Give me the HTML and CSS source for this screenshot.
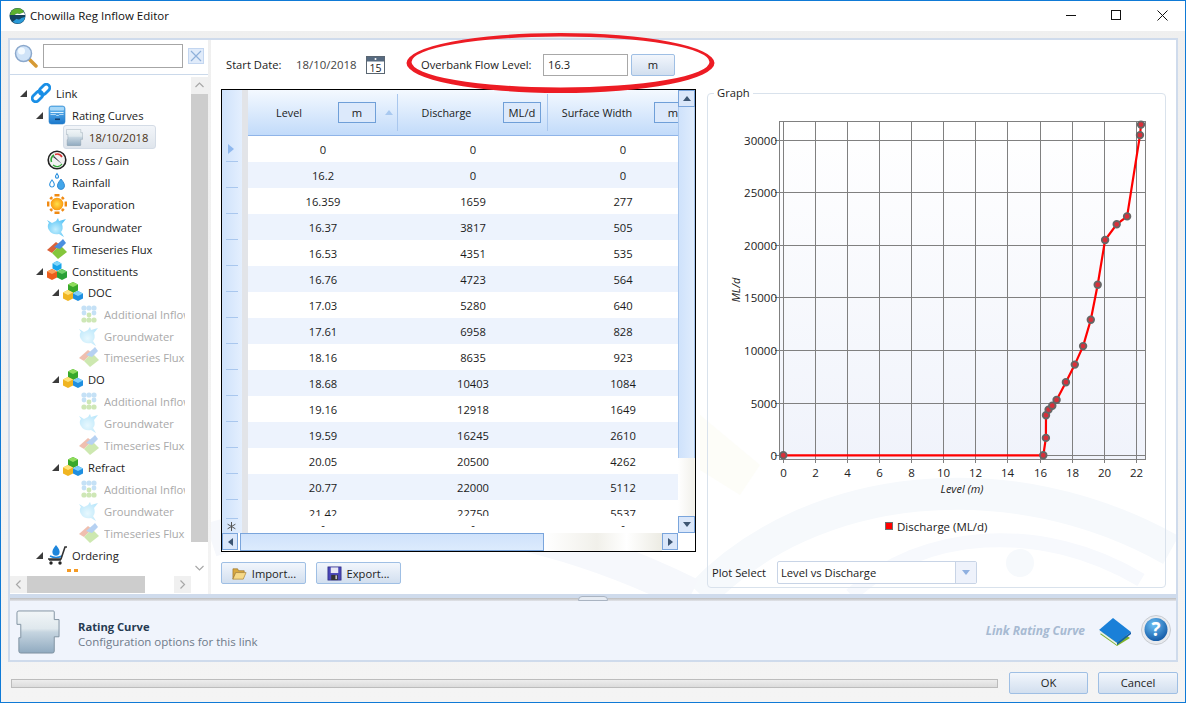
FILE: index.html
```html
<!DOCTYPE html>
<html lang="en">
<head>
<meta charset="utf-8">
<title>Chowilla Reg Inflow Editor</title>
<link rel="stylesheet" href="styles.css">
</head>
<body>
<svg class="defs" width="0" height="0" aria-hidden="true">
<defs>
<linearGradient id="gTile" x1="0" y1="0" x2="0" y2="1"><stop offset="0" stop-color="#f2f6f8"/><stop offset=".42" stop-color="#dfe8ed"/><stop offset=".5" stop-color="#c6d5e0"/><stop offset="1" stop-color="#90aac0"/></linearGradient>
<linearGradient id="gBlue" x1="0" y1="0" x2="0" y2="1"><stop offset="0" stop-color="#6fbdf2"/><stop offset="1" stop-color="#1a78cc"/></linearGradient>
<radialGradient id="gGw" cx=".45" cy=".6" r=".6"><stop offset="0" stop-color="#c4eefd"/><stop offset="1" stop-color="#5cc6f6"/></radialGradient>
<radialGradient id="gHelp" cx=".4" cy=".3" r=".8"><stop offset="0" stop-color="#6cc0f5"/><stop offset="1" stop-color="#0a4f9e"/></radialGradient>
<radialGradient id="gSun" cx=".5" cy=".5" r=".5"><stop offset="0" stop-color="#ffe04a"/><stop offset="1" stop-color="#fa9a10"/></radialGradient>
<symbol id="i-tile" viewBox="0 0 46 46"><path d="M3 1H39Q40 1 40 2V10H45V28H40V43Q40 45 38 45H5Q3 45 3 43V29H5V15H1V3Q1 1 3 1Z" fill="url(#gTile)" stroke="#7f919f"/></symbol>
<symbol id="i-link" viewBox="0 0 20 20"><g fill="#fff" fill-opacity="0" stroke="#1a8fe6" stroke-width="2.800"><rect x="0.500" y="10" width="12" height="7" rx="3.500" transform="rotate(-45 6.500 13.500)"/><rect x="7.500" y="3" width="12" height="7" rx="3.500" transform="rotate(-45 13.500 6.500)"/></g></symbol>
<symbol id="i-rating" viewBox="0 0 20 20"><rect x="2" y="1" width="16" height="18" rx="2.500" fill="url(#gBlue)" stroke="#2a7fc8" stroke-width=".6"/><rect x="3" y="2" width="14" height="3.500" rx="1" fill="#a8d8f8"/><path d="M3.500 7.500h13" stroke="#dff2ff"/><path d="M3.500 9.500h5l1 1h2l1-1h4" fill="none" stroke="#dff2ff" stroke-width=".7"/><rect x="8" y="13.500" width="5" height="1.600" fill="#123f6e"/></symbol>
<symbol id="i-gauge" viewBox="0 0 20 20"><circle cx="10" cy="10" r="8.800" fill="#f2f2f2" stroke="#222" stroke-width="1.600"/><path d="M4.500 12A6 6 0 0 1 7 5" fill="none" stroke="#2fa836" stroke-width="1.500"/><path d="M8 4.500A6 6 0 0 1 15 7" fill="none" stroke="#d93030" stroke-width="1.500"/><path d="M15 14 7 6l-1 1z" fill="#334"/><path d="M6 15a6 6 0 0 0 9-1" fill="none" stroke="#2fa836" stroke-width="1.200"/></symbol>
<symbol id="i-rain" viewBox="0 0 20 20"><g fill="#fff" stroke="#2a90de" stroke-width="1.100"><path d="M5 8c2 2.500 2.700 3.800 2.200 5.300a2.300 2.300 0 0 1-4.400 0C2.300 11.800 3 10.500 5 8z"/><path d="M10 1.500c1.400 1.800 1.800 2.600 1.400 3.700a1.500 1.500 0 0 1-2.800 0C8.200 4.100 8.600 3.300 10 1.500z"/></g><path d="M14 7c2.800 3.500 4 5.500 3.300 8a3.500 3.500 0 0 1-6.700 0c-.6-2.500.6-4.500 3.400-8z" fill="#43a6ea" stroke="#1a78c8" stroke-width=".8"/></symbol>
<symbol id="i-sun" viewBox="0 0 20 20"><g stroke="#f08a12" stroke-width="2.400"><path d="M7.500 1.200l5 0M7.500 18.800h5M1.200 7.500v5M18.800 7.500v5M3.200 5.200l2-2M14.800 16.800l2-2M3.200 14.800l2 2M14.800 3.200l2 2"/></g><circle cx="10" cy="10" r="6.300" fill="url(#gSun)"/></symbol>
<symbol id="i-gw" viewBox="0 0 20 20"><path d="M0 3l5 3 4-2 2-3 1 3 7-2-4 5c1 3 1 6-1 8l3 5-5-3c-4 1-8 0-10-4C0 10 1 7 2 6z" fill="url(#gGw)"/></symbol>
<symbol id="i-flux" viewBox="0 0 20 20"><path d="M0 11 9 3l4 3-8 8z" fill="#d9623a"/><path d="M5 14l8-8 7 7-9 7z" fill="#84c63c"/><path d="M7 8l7-6 2-2 3 4-6 6z" fill="#4a8edf"/></symbol>
<symbol id="i-cubes" viewBox="0 0 20 20"><path d="M10 0l4.500 2.500v5L10 10 5.500 7.500v-5z" fill="#18a4ea"/><path d="M10 0l4.500 2.500L10 5 5.500 2.500z" fill="#7fd5fa"/><path d="M5 8l5 2.500v6L5 19 0 16.500v-6z" fill="#ec5e1c"/><path d="M5 8l5 2.500L5 13 0 10.500z" fill="#fba15a"/><path d="M15 8l5 2.500v6L15 19l-5-2.500v-6z" fill="#2a9f36"/><path d="M15 8l5 2.500-5 2.500-5-2.500z" fill="#6fd06a"/></symbol>
<symbol id="i-cubes2" viewBox="0 0 20 20"><path d="M10 0l5 2.500v6L10 11 5 8.500v-6z" fill="#38a82a"/><path d="M10 0l5 2.500L10 5 5 2.500z" fill="#8fdc5c"/><path d="M5 8l5 2.500v6L5 19 0 16.500v-6z" fill="#f0b522"/><path d="M5 8l5 2.500L5 13 0 10.500z" fill="#ffe27a"/><path d="M15 9l5 2.500v5L15 19l-5-2.500v-5z" fill="#1f8fe0"/><path d="M15 9l5 2.500-5 2.500-5-2.500z" fill="#7fd0fa"/></symbol>
<symbol id="i-add" viewBox="0 0 20 20"><g fill="#6fb6ea"><circle cx="5" cy="4" r="2.600"/><circle cx="10" cy="4" r="2.600"/><circle cx="15" cy="4" r="2.600"/><circle cx="5" cy="9" r="2.400"/><circle cx="15" cy="9" r="2.400"/></g><g fill="#86c44a"><circle cx="10" cy="11" r="2.400"/><circle cx="5" cy="16" r="2.600"/><circle cx="10" cy="16" r="2.600"/><circle cx="15" cy="16" r="2.600"/></g></symbol>
<symbol id="i-cart" viewBox="0 0 20 20"><path d="M9 0c3 3.500 4 5.500 3.500 8a3.600 3.600 0 0 1-7 0C5 5.500 6 3.500 9 0z" fill="#1e86dc"/><path d="M3 11c4 2 8 2 12 0" fill="none" stroke="#1e86dc" stroke-width="1.500"/><path d="M1 14h13l4-12h2M2 15h12" fill="none" stroke="#333" stroke-width="1.600"/><circle cx="4" cy="18" r="1.700" fill="#222"/><circle cx="13" cy="18" r="1.700" fill="#222"/></symbol>
<symbol id="i-orange" viewBox="0 0 20 20"><path d="M4 2h4v3H4zM11 2h4v3h-4z" fill="#f59a23"/></symbol>
</defs>
</svg>

<div class="window">
  <header class="titlebar">
    <svg class="app-logo" viewBox="0 0 18 18" width="17" height="18"><circle cx="9" cy="9" r="8.500" fill="#15425f"/><path d="M1 8a8 8 0 0 1 15-3l-5 2a4 4 0 0 0-5 1z" fill="#5cb030"/><path d="M17 10a8 8 0 0 1-13 5l4-3a4 4 0 0 0 5-1z" fill="#2a9ad8"/><path d="M6 8a4 4 0 0 1 5-1l5-2 1 3z" fill="#fff"/></svg>
    <span class="app-title">Chowilla Reg Inflow Editor</span>
    <div class="win-controls">
      <svg class="win-btn" viewBox="0 0 46 30" width="46" height="30"><path d="M19 14.500h10" stroke="#111" fill="none"/></svg>
      <svg class="win-btn" viewBox="0 0 46 30" width="46" height="30"><rect x="18.500" y="9.500" width="9" height="9" stroke="#111" fill="none"/></svg>
      <svg class="win-btn" viewBox="0 0 46 30" width="46" height="30"><path d="M18.500 9.500l10 10M28.500 9.500l-10 10" stroke="#111" fill="none"/></svg>
    </div>
  </header>

  <div class="panel">
    <div class="top">
      <aside class="nav">
        <div class="search">
          <svg class="search-icon" viewBox="0 0 24 24" width="24" height="24"><path d="M15 15l7 7" stroke="#d69a35" stroke-width="3.500" stroke-linecap="round"/><circle cx="9.500" cy="9.500" r="8" fill="#cfe3f8" stroke="#8ba8cc" stroke-width="1.500"/><circle cx="7.500" cy="7" r="3.500" fill="#f4faff"/></svg>
          <div class="search-input"></div>
          <div class="search-clear"><svg viewBox="0 0 16 16" width="16" height="16"><path d="M3 3l10 10M13 3L3 13" stroke="#8fb0da" stroke-width="1.200"/></svg></div>
        </div>
        <div class="nav-rule"></div>
        <div class="tree-wrap">
          <div class="tree">
            <div class="row l0"><i class="arrow"></i><svg class="ico"><use href="#i-link"/></svg><span>Link</span></div>
            <div class="row l1"><i class="arrow"></i><svg class="ico"><use href="#i-rating"/></svg><span>Rating Curves</span></div>
            <div class="row l1"><div class="selected"><svg class="ico-tile"><use href="#i-tile"/></svg><span>18/10/2018</span></div></div>
            <div class="row l1 down"><i class="noarrow"></i><svg class="ico"><use href="#i-gauge"/></svg><span>Loss / Gain</span></div>
            <div class="row l1"><i class="noarrow"></i><svg class="ico"><use href="#i-rain"/></svg><span>Rainfall</span></div>
            <div class="row l1"><i class="noarrow"></i><svg class="ico"><use href="#i-sun"/></svg><span>Evaporation</span></div>
            <div class="row l1 down"><i class="noarrow"></i><svg class="ico"><use href="#i-gw"/></svg><span>Groundwater</span></div>
            <div class="row l1"><i class="noarrow"></i><svg class="ico"><use href="#i-flux"/></svg><span>Timeseries Flux</span></div>
            <div class="row l1"><i class="arrow"></i><svg class="ico"><use href="#i-cubes"/></svg><span>Constituents</span></div>
            <div class="row l2 up"><i class="arrow"></i><svg class="ico"><use href="#i-cubes2"/></svg><span>DOC</span></div>
            <div class="row l3 off"><i class="noarrow"></i><svg class="ico"><use href="#i-add"/></svg><span>Additional Inflow</span></div>
            <div class="row l3 off"><i class="noarrow"></i><svg class="ico"><use href="#i-gw"/></svg><span>Groundwater</span></div>
            <div class="row l3 off up"><i class="noarrow"></i><svg class="ico"><use href="#i-flux"/></svg><span>Timeseries Flux</span></div>
            <div class="row l2"><i class="arrow"></i><svg class="ico"><use href="#i-cubes2"/></svg><span>DO</span></div>
            <div class="row l3 off"><i class="noarrow"></i><svg class="ico"><use href="#i-add"/></svg><span>Additional Inflow</span></div>
            <div class="row l3 off"><i class="noarrow"></i><svg class="ico"><use href="#i-gw"/></svg><span>Groundwater</span></div>
            <div class="row l3 off"><i class="noarrow"></i><svg class="ico"><use href="#i-flux"/></svg><span>Timeseries Flux</span></div>
            <div class="row l2"><i class="arrow"></i><svg class="ico"><use href="#i-cubes2"/></svg><span>Refract</span></div>
            <div class="row l3 off"><i class="noarrow"></i><svg class="ico"><use href="#i-add"/></svg><span>Additional Inflow</span></div>
            <div class="row l3 off"><i class="noarrow"></i><svg class="ico"><use href="#i-gw"/></svg><span>Groundwater</span></div>
            <div class="row l3 off"><i class="noarrow"></i><svg class="ico"><use href="#i-flux"/></svg><span>Timeseries Flux</span></div>
            <div class="row l1"><i class="arrow"></i><svg class="ico"><use href="#i-cart"/></svg><span>Ordering</span></div>
            <div class="row l2"><i class="noarrow"></i><svg class="ico"><use href="#i-orange"/></svg></div>
          </div>
          <div class="nav-vscroll">
            <div class="nav-sbtn"><svg viewBox="0 0 17 17" width="17" height="17"><path d="M4.500 10l4-4 4 4" fill="none" stroke="#a8a8a8" stroke-width="1.200"/></svg></div>
            <div class="nav-vthumb"></div>
            <div class="nav-sbtn nav-sbtn-end"><svg viewBox="0 0 17 17" width="17" height="17"><path d="M4.500 7l4 4 4-4" fill="none" stroke="#a8a8a8" stroke-width="1.200"/></svg></div>
          </div>
        </div>
        <div class="nav-hscroll">
          <div class="nav-sbtn"><svg viewBox="0 0 17 17" width="17" height="17"><path d="M10.500 4.500l-4 4 4 4" fill="none" stroke="#a8a8a8" stroke-width="1.200"/></svg></div>
          <div class="nav-hthumb"></div>
          <div class="nav-sbtn nav-sbtn-end"><svg viewBox="0 0 17 17" width="17" height="17"><path d="M6.500 4.500l4 4-4 4" fill="none" stroke="#a8a8a8" stroke-width="1.200"/></svg></div>
          <div class="nav-corner"></div>
        </div>
      </aside>

      <main class="content">
        <svg class="watermark" viewBox="0 0 965 554" width="965" height="554" aria-hidden="true">
          <path d="M490 555C600 440 800 420 960 510" fill="none" stroke="#f6f9fc" stroke-width="32"/>
          <path d="M640 555C710 490 830 480 930 540" fill="none" stroke="#f7f9fd" stroke-width="14"/>
          <circle cx="809" cy="523" r="14" fill="#f6f9fc"/>
          <path d="M489 375l60 50-20 30-40-25z" fill="#fdfdf8"/>
          <path d="M0 500C150 450 330 480 480 555" fill="none" stroke="#f6f8fc" stroke-width="34"/>
        </svg>
        <svg class="scribble" viewBox="0 0 320 70" width="320" height="70" aria-hidden="true">
          <path fill-rule="evenodd" d="M.5 31a154 30 0 1 0 308 0a154 30 0 1 0-308 0ZM5.500 30a149 25.500 0 1 0 298 0a149 25.500 0 1 0-298 0Z" fill="#ed1c24"/>
        </svg>
        <div class="toolbar">
          <span class="lbl-start">Start Date:</span>
          <span class="val-date">18/10/2018</span>
          <svg class="cal" viewBox="0 0 19 18" width="19" height="18"><rect x=".5" y=".5" width="18" height="17" fill="#fff" stroke="#5a6672"/><rect x="1" y="1" width="17" height="4.500" fill="#566a80"/><circle cx="9.500" cy="3" r="1" fill="#fff"/><text x="9.500" y="15.500" text-anchor="middle" class="cal-num">15</text></svg>
          <span class="lbl-over">Overbank Flow Level:</span>
          <div class="input-over">16.3</div>
          <div class="btn btn-unit">m</div>
        </div>
        <div class="work">
          <div class="left-col">
            <div class="grid">
              <div class="grid-main">
                <div class="row-head">
                  <div class="rh-top"></div>
                  <div class="rh"><svg viewBox="0 0 6 10" width="6" height="10"><path d="M0 0l6 5-6 5z" fill="#8fb8ee"/></svg></div>
                  <div class="rh"></div><div class="rh"></div><div class="rh"></div><div class="rh"></div><div class="rh"></div><div class="rh"></div><div class="rh"></div><div class="rh"></div><div class="rh"></div><div class="rh"></div><div class="rh"></div><div class="rh"></div><div class="rh"></div>
                  <div class="rh rh-cut"></div>
                  <div class="rh rh-new"><svg viewBox="0 0 9 9" width="9" height="9"><path d="M4.500 0v9M.6 2.200l7.800 4.600M.6 6.800l7.800-4.600" stroke="#555" stroke-width="1"/></svg></div>
                </div>
                <div class="grid-body">
                  <div class="col-heads">
                    <div class="col-grip"></div>
                    <div class="col-head col-a"><span class="col-name name-a">Level</span><span class="unit">m</span><i class="sort"></i></div>
                    <div class="col-head col-b"><span class="col-name name-b">Discharge</span><span class="unit">ML/d</span></div>
                    <div class="col-head col-c"><span class="col-name name-c">Surface Width</span><span class="unit">m</span></div>
                  </div>
                  <div class="rows">
                    <div class="tr"><span>0</span><span>0</span><span>0</span></div>
                    <div class="tr alt"><span>16.2</span><span>0</span><span>0</span></div>
                    <div class="tr"><span>16.359</span><span>1659</span><span>277</span></div>
                    <div class="tr alt"><span>16.37</span><span>3817</span><span>505</span></div>
                    <div class="tr"><span>16.53</span><span>4351</span><span>535</span></div>
                    <div class="tr alt"><span>16.76</span><span>4723</span><span>564</span></div>
                    <div class="tr"><span>17.03</span><span>5280</span><span>640</span></div>
                    <div class="tr alt"><span>17.61</span><span>6958</span><span>828</span></div>
                    <div class="tr"><span>18.16</span><span>8635</span><span>923</span></div>
                    <div class="tr alt"><span>18.68</span><span>10403</span><span>1084</span></div>
                    <div class="tr"><span>19.16</span><span>12918</span><span>1649</span></div>
                    <div class="tr alt"><span>19.59</span><span>16245</span><span>2610</span></div>
                    <div class="tr"><span>20.05</span><span>20500</span><span>4262</span></div>
                    <div class="tr alt"><span>20.77</span><span>22000</span><span>5112</span></div>
                    <div class="tr tr-cut"><span>21.42</span><span>22750</span><span>5537</span></div>
                    <div class="tr tr-dash"><span>-</span><span>-</span><span>-</span></div>
                  </div>
                </div>
                <div class="vscroll">
                  <div class="sbtn"><i class="tri-up"></i></div>
                  <div class="vthumb"></div>
                  <div class="vtrack"></div>
                  <div class="sbtn"><i class="tri-down"></i></div>
                </div>
              </div>
              <div class="hscroll">
                <div class="sbtn sbtn-h"><i class="tri-left"></i></div>
                <div class="hthumb"></div>
                <div class="htrack"></div>
                <div class="sbtn sbtn-h"><i class="tri-right"></i></div>
                <div class="hcorner"></div>
              </div>
            </div>
            <div class="actions">
              <div class="btn btn-action"><svg viewBox="0 0 16 16" width="17" height="15"><path d="M1 3h5l1 2h6v2H4L1 14z" fill="#d9a93f" stroke="#96702a" stroke-width=".7"/><path d="M4 7h11l-3 7H1z" fill="#f6d987" stroke="#a67f32" stroke-width=".7"/></svg><span>Import...</span></div>
              <div class="btn btn-action"><svg viewBox="0 0 16 16" width="15" height="15"><rect x="1" y="1" width="14" height="14" fill="#4a47b8" stroke="#2d2b80" stroke-width=".8"/><rect x="4" y="1.500" width="8" height="6" fill="#e8e8f4"/><rect x="4.500" y="9.500" width="7" height="5.500" fill="#333"/><rect x="9" y="10" width="1.600" height="4" fill="#ccc"/></svg><span>Export...</span></div>
            </div>
          </div>
          <section class="graph">
            <span class="graph-legend">Graph</span>
            <svg class="chart" viewBox="708 100 457 455" width="457" height="455">
              <defs><linearGradient id="gPlot" x1="0" y1="0" x2="0" y2="1"><stop offset="0" stop-color="#fff"/><stop offset="1" stop-color="#f0f3fb"/></linearGradient></defs>
              <rect x="779.500" y="121.500" width="366" height="338" fill="url(#gPlot)"/>
              <g class="gridl">
                <path d="M783.500 121v342M815.500 121v342M847.500 121v342M879.500 121v342M911.500 121v342M943.500 121v342M975.500 121v342M1007.500 121v342M1040.500 121v342M1072.500 121v342M1104.500 121v342M1136.500 121v342"/>
                <path d="M775 140.500h370M775 192.500h370M775 245.500h370M775 297.500h370M775 350.500h370M775 403.500h370M775 455.500h370"/>
                <rect x="779.500" y="121.500" width="366" height="338" fill="none"/>
              </g>
              <g class="ytick"><text x="777" y="144.500">30000</text><text x="777" y="197">25000</text><text x="777" y="250">20000</text><text x="777" y="302">15000</text><text x="777" y="355">10000</text><text x="777" y="408">5000</text><text x="777" y="460">0</text></g>
              <g class="xtick"><text x="783.500" y="477">0</text><text x="815.500" y="477">2</text><text x="847.500" y="477">4</text><text x="879.500" y="477">6</text><text x="911.500" y="477">8</text><text x="943.500" y="477">10</text><text x="975.500" y="477">12</text><text x="1007.500" y="477">14</text><text x="1040.500" y="477">16</text><text x="1072.500" y="477">18</text><text x="1104.500" y="477">20</text><text x="1136.500" y="477">22</text></g>
              <text class="axis-title" x="962" y="493" text-anchor="middle">Level (m)</text>
              <text class="axis-title" transform="translate(740 290) rotate(-90)" text-anchor="middle">ML/d</text>
              <polyline class="curve" points="783.300,455.300 1043.300,455.300 1045.900,437.900 1046,415.200 1048.600,409.600 1052.300,405.700 1056.600,399.900 1065.900,382.200 1074.800,364.600 1083.100,346.100 1090.800,319.700 1097.700,284.700 1105.100,240 1116.700,224.300 1127.100,216.400 1140,135.100 1141,124.600"/>
              <g class="marks">
                <circle cx="783.300" cy="455.300" r="3.300"/><circle cx="1043.300" cy="455.300" r="3.300"/><circle cx="1045.900" cy="437.900" r="3.300"/><circle cx="1046" cy="415.200" r="3.300"/><circle cx="1048.600" cy="409.600" r="3.300"/><circle cx="1052.300" cy="405.700" r="3.300"/><circle cx="1056.600" cy="399.900" r="3.300"/><circle cx="1065.900" cy="382.200" r="3.300"/><circle cx="1074.800" cy="364.600" r="3.300"/><circle cx="1083.100" cy="346.100" r="3.300"/><circle cx="1090.800" cy="319.700" r="3.300"/><circle cx="1097.700" cy="284.700" r="3.300"/><circle cx="1105.100" cy="240" r="3.300"/><circle cx="1116.700" cy="224.300" r="3.300"/><circle cx="1127.100" cy="216.400" r="3.300"/><circle cx="1140" cy="135.100" r="3.300"/><circle cx="1141" cy="124.600" r="3.300"/>
              </g>
              <rect x="885.500" y="522.500" width="7" height="7" fill="#f00" stroke="#707070"/>
              <text class="legend-text" x="897" y="531">Discharge (ML/d)</text>
            </svg>
            <div class="plot-select">
              <span class="plot-label">Plot Select</span>
              <div class="combo"><span class="combo-text">Level vs Discharge</span><div class="combo-btn"><i class="combo-tri"></i></div></div>
            </div>
          </section>
        </div>
      </main>
    </div>
    <div class="splitter"><div class="grip"></div></div>
    <footer class="info">
      <svg class="info-tile"><use href="#i-tile"/></svg>
      <div class="info-text"><strong>Rating Curve</strong><span>Configuration options for this link</span></div>
      <span class="info-tag">Link Rating Curve</span>
      <svg class="book" viewBox="0 0 34 30" width="34" height="30"><path d="M2 18 14 9l18 13-13 8z" fill="#7fb32a"/><path d="M1 14 15 2l18 14-14 11z" fill="#1a80d8"/><path d="M1 14l18 13v2L1 16z" fill="#e8eef2"/><path d="M19 27l14-11v2L19 29z" fill="#0f5aa8"/></svg>
      <svg class="help" viewBox="0 0 30 32" width="30" height="32"><circle cx="15" cy="15" r="14.500" fill="#e8eaee" stroke="#c8ccd2"/><circle cx="15" cy="14.500" r="11.500" fill="url(#gHelp)"/><text x="15" y="21" text-anchor="middle" class="help-q">?</text></svg>
    </footer>
  </div>

  <div class="bottom">
    <div class="progress"></div>
    <div class="btn btn-ok">OK</div>
    <div class="btn btn-cancel">Cancel</div>
  </div>
</div>
</body>
</html>
```
FILE: styles.css
```css
* { box-sizing: border-box; }
html, body { margin: 0; padding: 0; }
body {
  width: 1186px; height: 703px; overflow: hidden;
  font-family: "Open Sans", "Noto Sans", sans-serif;
  font-size: 11.2px; color: #1b1b1b; background: #efefef;
}
.defs { position: absolute; }
.window {
  width: 1186px; height: 703px; display: flex; flex-direction: column;
  border: 1px solid #0f7ad6;
  background: linear-gradient(180deg, #efefef, #f4f4f4);
}
.titlebar { height: 30px; background: #fff; display: flex; align-items: center; padding-left: 8px; flex: none; }
.app-logo { flex: none; }
.app-title { margin-left: 4px; margin-top: -2px; font-size: 11.5px; color: #111; }
.win-controls { margin-left: auto; display: flex; }
.win-btn { display: block; }

.panel {
  margin: 7px 7px 0; width: 1170px; height: 624px; flex: none;
  border: 2px solid #cfdbec; display: flex; flex-direction: column;
}
.top { height: 554px; display: flex; flex: none; }
.nav { width: 198px; flex: none; background: #fff; display: flex; flex-direction: column; margin-right: 3px; }
.search { height: 34px; display: flex; flex: none; align-items: flex-start; padding: 4px 0 0 4px; }
.search-icon { flex: none; }
.search-input { width: 140px; height: 24px; margin-left: 5px; border: 1px solid #a6a6a6; background: #fff; flex: none; }
.search-clear { width: 16px; height: 16px; margin: 4px 0 0 5px; border: 1px solid #c3d6f0; background: #e0ebfa; flex: none; display: flex; }
.search-clear svg { margin: -1px; }
.nav-rule { height: 1px; flex: none; background: #cbd9ea; margin-bottom: 2px; }
.tree-wrap { height: 499px; display: flex; flex: none; }
.tree { width: 181px; flex: none; overflow: hidden; padding-top: 5px; }
.row { height: 22px; display: flex; align-items: center; white-space: nowrap; }
.row.down { margin-top: 1px; }
.row.up { margin-top: -1px; }
.row.l0 { padding-left: 10px; }
.row.l1 { padding-left: 26px; }
.row.l2 { padding-left: 42px; }
.row.l3 { padding-left: 58px; }
.row.off > svg { opacity: .4; }
.row.off > span { color: #a9a9a9; width: 81px; overflow: hidden; flex: none; }
.arrow { width: 7px; height: 7px; flex: none; border-style: solid; border-width: 0 0 7px 7px; border-color: transparent transparent #3c3c3c; }
.noarrow { width: 7px; flex: none; }
.ico { width: 20px; height: 20px; margin: 0 5px 0 4px; flex: none; }
.selected {
  margin-left: 27px; width: 93px; height: 24px; flex: none; display: flex; align-items: center;
  border: 1px solid #d4dce6; border-radius: 3px;
  background: linear-gradient(180deg, #f2f5f9, #dfe5ec);
  color: #4a3214; padding-left: 2px;
}
.ico-tile { width: 17px; height: 17px; margin-right: 6px; flex: none; }

.nav-vscroll { width: 17px; flex: none; display: flex; flex-direction: column; }
.nav-sbtn { width: 17px; height: 17px; flex: none; background: #f0f0f0; }
.nav-sbtn-end { background: #fff; }
.nav-vthumb { height: 448px; background: #cdcdcd; flex: none; }
.nav-vscroll .nav-sbtn-end { margin-top: auto; }
.nav-hscroll { height: 17px; display: flex; flex: none; }
.nav-hthumb { width: 118px; background: #cdcdcd; flex: none; }
.nav-hscroll .nav-sbtn { background: #f0f0f0; }
.nav-hscroll .nav-sbtn-end { margin-left: 29px; }
.nav-corner { width: 17px; background: #fff; flex: none; }

.content { flex: 1; min-width: 0; background: #fff; position: relative; padding-left: 10px; }
.watermark { position: absolute; left: 0; top: 0; }
.scribble { position: absolute; left: 195px; top: -8px; z-index: 3; }
.toolbar { height: 49px; display: flex; align-items: center; padding-left: 5px; position: relative; }
.lbl-start { width: 70px; flex: none; }
.val-date { width: 70px; flex: none; color: #444; font-size: 11.4px; margin-top: -1px; }
.cal { flex: none; }
.cal-num { font-size: 10.500px; fill: #222; }
.lbl-over { margin-left: 36px; width: 122px; flex: none; }
.input-over { width: 85px; height: 22px; flex: none; border: 1px solid #a8a8a8; background: #fff; padding-left: 4px; line-height: 20px; }
.btn {
  display: flex; align-items: center; justify-content: center;
  border: 1px solid #9fbfe4; border-radius: 2px;
  background: linear-gradient(180deg, #f2f6fc, #d2dfef);
  color: #222;
}
.btn-unit { width: 44px; height: 22px; margin-left: 3px; flex: none; }

.work { display: flex; position: relative; }
.left-col { width: 475px; flex: none; }
.grid { width: 475px; height: 463px; border: 1px solid #000; display: flex; flex-direction: column; background: #fff; }
.grid-main { height: 443px; display: flex; flex: none; }
.row-head { width: 20px; flex: none; background: linear-gradient(90deg, #cfe2fb, #e4effe); overflow: hidden; }
.rh-top { height: 46px; }
.rh { height: 26px; margin: 0 4px; border-bottom: 1px solid #a9c7ee; display: flex; align-items: center; justify-content: center; padding-right: 2px; }
.rh-cut { height: 19px; }
.rh-new { border: 0; height: 14px; }
.grid-body { width: 436px; flex: none; overflow: hidden; border-left: 6px solid #e2e4e8; position: relative; }
.col-heads {
  display: flex; height: 46px; width: 436px; margin-left: -6px; padding-left: 0;
  background: linear-gradient(180deg, #f4f9ff, #c2dbfa);
  border-bottom: 1px solid #8fb4e8; overflow: hidden;
}
.col-grip { width: 6px; flex: none; border-right: 1px solid #a9c7ee; margin: 4px 0; }
.col-head { display: flex; align-items: center; flex: none; border-right: 1px solid #a9c7ee; margin: 4px 0; }
.col-a { width: 150px; }
.col-b { width: 150px; }
.col-c { width: 150px; border-right: 0; }
.col-name { flex: none; text-align: center; padding-right: 8px; font-size: 10.8px; }
.name-a { width: 90px; }
.name-b { width: 105px; }
.name-c { width: 106px; }
.unit {
  width: 38px; height: 21px; flex: none; border: 1px solid #6f9fd8;
  background: #dce9fb; text-align: center; line-height: 19px;
}
.sort { width: 0; height: 0; margin-left: 9px; border-style: solid; border-width: 0 4px 5px; border-color: transparent transparent #a9c9f0; }
.rows { width: 430px; overflow: hidden; }
.tr { display: grid; grid-template-columns: 150px 150px 130px; height: 26px; align-items: center; justify-items: center; }
.tr > span:nth-child(3) { transform: translateX(10px); }
.tr.alt { background: #edf3fd; }
.tr-cut { height: 16px; overflow: hidden; align-items: start; padding-top: 6px; }
.tr-dash { height: 17px; }
.vscroll { width: 17px; flex: none; display: flex; flex-direction: column; }
.sbtn { width: 17px; height: 17px; flex: none; background: #dae7fa; border: 1px solid #7aa5dc; display: flex; align-items: center; justify-content: center; }
.sbtn-h { width: 16px; height: 17px; }
.vthumb { height: 351px; flex: none; background: linear-gradient(90deg, #cfe2fb, #dfecfd); border-left: 1px solid #a9c7ee; border-right: 1px solid #a9c7ee; }
.vtrack { flex: 1; background: linear-gradient(90deg, #fff, #f1f0ea); }
.tri-up { border-style: solid; border-width: 0 4px 5px; border-color: transparent transparent #3d5673; }
.tri-down { border-style: solid; border-width: 5px 4px 0; border-color: #3d5673 transparent transparent; }
.tri-left { border-style: solid; border-width: 4px 5px 4px 0; border-color: transparent #3d5673 transparent transparent; }
.tri-right { border-style: solid; border-width: 4px 0 4px 5px; border-color: transparent transparent transparent #3d5673; }
.hscroll { height: 18px; display: flex; flex: none; }
.hthumb { width: 304px; margin-left: 2px; flex: none; background: linear-gradient(180deg, #cfe2fb, #dcebfd); border: 1px solid #7aa5dc; }
.htrack { flex: 1; background: linear-gradient(90deg, #fff, #f1f0ea 45%, #fff 70%, #ecebe3); }
.hcorner { width: 17px; flex: none; background: #fff; }
.actions { display: flex; gap: 10px; margin-top: 10px; }
.btn-action { width: 85px; height: 22px; gap: 4px; }

.graph { position: relative; margin: 4px 0 0 11px; width: 459px; height: 495px; border: 1px solid #d9e2ec; border-radius: 4px; }
.graph-legend { position: absolute; left: 6px; top: -9px; padding: 0 3px; background: #fff; }
.chart { display: block; margin-top: 6px; }
.gridl path, .gridl rect { stroke: #808080; fill: none; }
.ytick text { text-anchor: end; font-size: 11.5px; fill: #222; }
.xtick text { text-anchor: middle; font-size: 11.5px; fill: #222; }
.axis-title { font-size: 11px; font-style: italic; fill: #222; }
.curve { fill: none; stroke: #f00; stroke-width: 2.200; }
.marks circle { fill: #d8303a; stroke: #666; stroke-width: 1.800; }
.legend-text { font-size: 11.500px; fill: #222; }
.plot-select { display: flex; align-items: center; height: 23px; padding-left: 4px; margin-top: 6px; position: relative; }
.plot-label { width: 65px; flex: none; }
.combo { width: 200px; height: 23px; flex: none; display: flex; align-items: center; border: 1px solid #c8d4e6; border-radius: 2px; background: #fff; }
.combo-text { flex: 1; padding-left: 3px; }
.combo-btn { width: 21px; height: 21px; background: #eef2fb; border-left: 1px solid #c8d4e6; display: flex; align-items: center; justify-content: center; }
.combo-tri { border-style: solid; border-width: 5px 4px 0; border-color: #8fb0e0 transparent transparent; }

.splitter { height: 7px; flex: none; background: linear-gradient(180deg, #cfdbec 0, #cfdbec 4px, #bdbdbd 4px, #e2e4ea 7px); position: relative; }
.grip { position: absolute; left: 568px; top: 2px; width: 30px; height: 5px; border: 1px solid #aab4c2; border-radius: 4px 4px 0 0; background: #e6ebf2; }
.info { height: 59px; flex: none; background: #f0f4fc; display: flex; align-items: center; padding-left: 6px; }
.info-tile { width: 44px; height: 44px; flex: none; margin-top: 2px; }
.info-text { display: flex; flex-direction: column; margin-left: 18px; margin-top: 7px; line-height: 15px; }
.info-text strong { color: #263a52; font-weight: 700; }
.info-text span { color: #6e7a8a; font-size: 11.5px; }
.info-tag { margin-left: auto; font-weight: 700; font-style: italic; font-size: 12px; color: #a7bad2; }
.book { flex: none; margin-left: 13px; }
.help { flex: none; margin: 0 5px 0 9px; }
.help-q { font-size: 19px; font-weight: 700; fill: #fff; }

.bottom { flex: 1; display: flex; align-items: center; padding: 0 7px 0 10px; }
.progress { width: 987px; height: 9px; flex: none; border: 1px solid #bcbcbc; background: linear-gradient(180deg, #ededed, #dcdcdc); margin-top: 3px; }
.btn-ok { width: 79px; height: 22px; margin-left: 11px; flex: none; margin-top: 1px; }
.btn-cancel { width: 80px; height: 22px; margin-left: 10px; flex: none; margin-top: 1px; }
```
